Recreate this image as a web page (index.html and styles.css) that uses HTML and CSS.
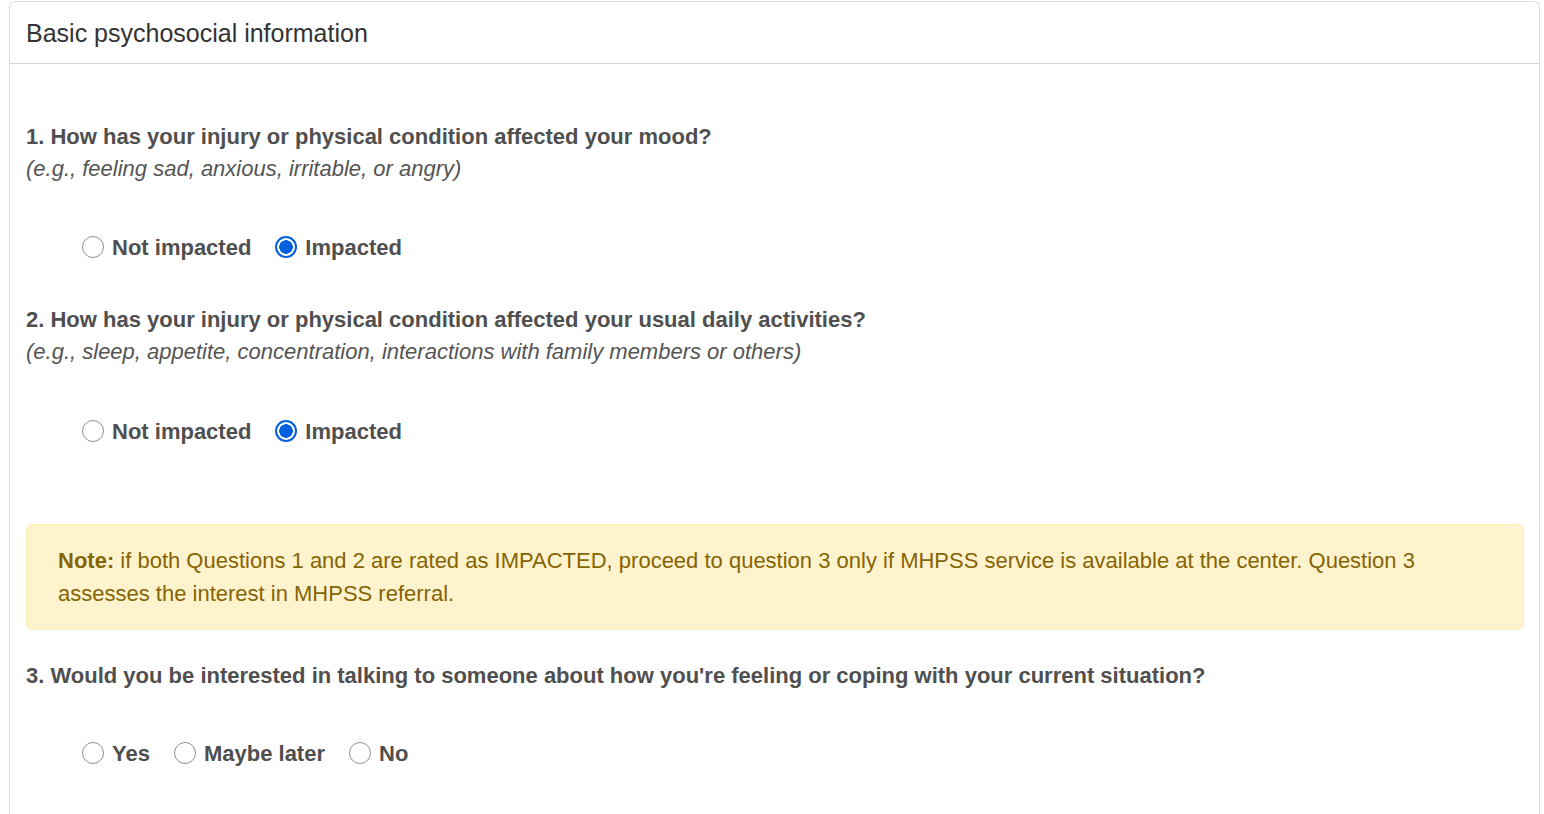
FILE: index.html
```html
<!DOCTYPE html>
<html>
<head>
<meta charset="utf-8">
<link rel="stylesheet" href="styles.css">
</head>
<body>
<div class="card">
  <div class="card-header">Basic psychosocial information</div>
  <div class="card-body">
    <div class="question q1">
      <div class="q-title">1. How has your injury or physical condition affected your mood?</div>
      <div class="q-hint">(e.g., feeling sad, anxious, irritable, or angry)</div>
      <div class="options">
        <label class="opt"><input type="radio" name="q1"><span>Not impacted</span></label>
        <label class="opt"><input type="radio" name="q1" checked><span>Impacted</span></label>
      </div>
    </div>
    <div class="question q2">
      <div class="q-title">2. How has your injury or physical condition affected your usual daily activities?</div>
      <div class="q-hint">(e.g., sleep, appetite, concentration, interactions with family members or others)</div>
      <div class="options">
        <label class="opt"><input type="radio" name="q2"><span>Not impacted</span></label>
        <label class="opt"><input type="radio" name="q2" checked><span>Impacted</span></label>
      </div>
    </div>
    <div class="note"><strong>Note:</strong> if both Questions 1 and 2 are rated as IMPACTED, proceed to question 3 only if MHPSS service is available at the center. Question 3 assesses the interest in MHPSS referral.</div>
    <div class="question q3">
      <div class="q-title">3. Would you be interested in talking to someone about how you're feeling or coping with your current situation?</div>
      <div class="options">
        <label class="opt"><input type="radio" name="q3"><span>Yes</span></label>
        <label class="opt"><input type="radio" name="q3"><span>Maybe later</span></label>
        <label class="opt"><input type="radio" name="q3"><span>No</span></label>
      </div>
    </div>
  </div>
</div>
</body>
</html>
```
FILE: styles.css
```css
html, body {
  margin: 0;
  padding: 0;
  background: #fff;
}
body {
  font-family: "Liberation Sans", Arial, sans-serif;
  color: #555;
  padding: 1px 4px 0 9px;
}
.card {
  border: 1px solid #ddd;
  border-bottom: none;
  border-radius: 6px 6px 0 0;
  height: 900px;
  box-sizing: border-box;
}
.card-header {
  height: 62px;
  box-sizing: border-box;
  padding: 2px 16px 0;
  display: flex;
  align-items: center;
  font-size: 25px;
  color: #333;
  border-bottom: 1px solid #d6d6d6;
}
.card-body {
  padding: 57px 15px 0 16px;
}
.q-title {
  font-size: 22px;
  font-weight: bold;
  line-height: 32px;
  color: #4f4f4f;
}
.q-hint {
  font-size: 22px;
  font-style: italic;
  line-height: 32px;
  color: #555;
}
.options {
  display: flex;
  gap: 24px;
  padding-left: 56px;
  margin-top: 47px;
  height: 32px;
  align-items: center;
}
.q2 { margin-top: 40px; }
.q2 .options { margin-top: 48px; }
.opt {
  display: flex;
  align-items: center;
  gap: 8px;
  font-size: 22px;
  font-weight: bold;
  color: #4f4f4f;
}
.opt input {
  appearance: none;
  -webkit-appearance: none;
  margin: 0;
  width: 22px;
  height: 22px;
  border: 1px solid #8f8f9d;
  border-radius: 50%;
  background: #fff;
  box-sizing: border-box;
  position: relative;
  top: -1px;
}
.opt input:checked {
  border: 2px solid #0060df;
  background: radial-gradient(circle, #0060df 0 6.5px, #fff 7px);
}
.note {
  margin-top: 76px;
  background: #fff3cd;
  border: 1px solid #ffeeba;
  border-radius: 6px;
  color: #856404;
  font-size: 22px;
  line-height: 33px;
  padding: 19px 32px 19px 31px;
}
.note strong { font-weight: bold; }
.q3 { margin-top: 30px; }
.q3 .options { margin-top: 46px; }
```
